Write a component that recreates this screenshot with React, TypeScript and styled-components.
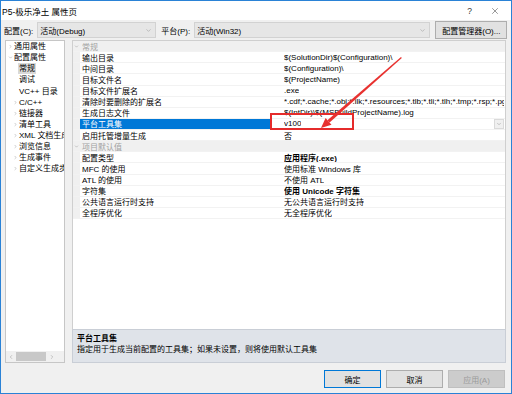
import React from 'react';
import styled, { createGlobalStyle } from 'styled-components';
import { ChevronDown, ChevronRight, ChevronLeft, X } from 'lucide-react';

const GlobalStyle = createGlobalStyle`
  html, body {
    margin: 0;
    padding: 0;
    background: #ffffff;
  }
  body {
    font-family: "Liberation Sans", "Noto Sans CJK SC", sans-serif;
    font-size: 8px;
    color: #000;
  }
  * { box-sizing: border-box; }
`;

const ROW_H = '11.13px';

const Window = styled.div`
  position: relative;
  width: 512px;
  height: 394px;
  border: 1px solid #2a82d6;
  background: #f0f0f0;
  display: flex;
  flex-direction: column;
  overflow: hidden;
`;

const TitleBar = styled.div`
  height: 19px;
  flex: none;
  background: #ffffff;
  display: flex;
  align-items: center;
  justify-content: space-between;
  padding-left: 1px;
  font-size: 8.5px;
`;

const TitleButtons = styled.div`
  display: flex;
  align-items: center;
  gap: 18px;
  padding-right: 11px;
  color: #333;
`;

const Toolbar = styled.div`
  height: 20px;
  flex: none;
  display: flex;
  align-items: center;
  padding: 0 5px 0 3px;
`;

const Label = styled.span`
  white-space: nowrap;
`;

const Combo = styled.div<{ $width: number }>`
  width: ${p => p.$width}px;
  flex: none;
  height: 16px;
  margin-left: 4px;
  margin-right: 5px;
  background: #e6e6e6;
  border: 1px solid #d2d2d2;
  display: flex;
  align-items: center;
  justify-content: space-between;
  padding: 0 3px 0 2px;
  white-space: nowrap;
  svg { color: #888; }
`;

const Button = styled.button<{ $focused?: boolean; $disabled?: boolean }>`
  height: 18px;
  padding: 0 6px;
  font: inherit;
  font-size: 8px;
  white-space: nowrap;
  background: ${p => (p.$disabled ? '#cccccc' : '#e1e1e1')};
  color: ${p => (p.$disabled ? '#9b9b9b' : '#000')};
  border: 1px solid ${p => (p.$focused ? '#0078d7' : p.$disabled ? '#bfbfbf' : '#adadad')};
  display: flex;
  align-items: center;
  justify-content: center;
`;

const Main = styled.div`
  height: 323px;
  flex: none;
  display: flex;
  gap: 7px;
  padding: 0 5px 0 4px;
`;

const Tree = styled.div`
  width: 60px;
  flex: none;
  background: #ffffff;
  border: 1px solid #c6c6c6;
  display: flex;
  flex-direction: column;
  overflow: hidden;
`;

const TreeList = styled.div`
  flex: 1;
  overflow: hidden;
`;

const TreeItem = styled.div<{ $indent: number; $selected?: boolean }>`
  height: ${ROW_H};
  display: flex;
  align-items: center;
  padding-left: ${p => p.$indent}px;
  white-space: nowrap;
  span {
    background: ${p => (p.$selected ? '#d9d9d9' : 'transparent')};
    padding: 0 1px;
    line-height: ${ROW_H};
  }
  svg { color: #8a8a8a; flex: none; }
`;

const Arrow = styled.div`
  width: 5px;
  flex: none;
  display: flex;
  align-items: center;
  justify-content: flex-start;
`;

const HScroll = styled.div`
  height: 11px;
  flex: none;
  background: #f0f0f0;
  display: flex;
  align-items: center;
  padding: 0 2px;
  svg { color: #777; flex: none; }
`;

const Thumb = styled.div`
  width: 30px;
  height: 9px;
  background: #c8c8c8;
  margin: 0 3px 0 2px;
`;

const RightPane = styled.div`
  flex: 1;
  min-width: 0;
  display: flex;
  flex-direction: column;
`;

const Grid = styled.div`
  flex: 1;
  background: #ffffff;
  border: 1px solid #cfcfcf;
  border-bottom: none;
  overflow: hidden;
`;

const GridRow = styled.div<{ $category?: boolean }>`
  height: ${ROW_H};
  display: flex;
  align-items: stretch;
  background: ${p => (p.$category ? '#f0f0f0' : '#ffffff')};
  border-bottom: 1px solid #f2f2f2;
  white-space: nowrap;
`;

const Gutter = styled.div`
  width: 7px;
  flex: none;
  background: #f0f0f0;
  display: flex;
  align-items: center;
  justify-content: center;
  svg { color: #8a8a8a; }
`;

const CategoryText = styled.div`
  display: flex;
  align-items: center;
  padding-left: 2px;
  color: #a2a2a2;
`;

const NameCell = styled.div<{ $selected?: boolean }>`
  width: 190px;
  flex: none;
  display: flex;
  align-items: center;
  padding-left: 2px;
  background: ${p => (p.$selected ? '#0078d7' : 'transparent')};
  color: ${p => (p.$selected ? '#ffffff' : '#000')};
  overflow: hidden;
`;

const ValueCell = styled.div<{ $bold?: boolean }>`
  flex: 1;
  min-width: 0;
  display: flex;
  align-items: center;
  justify-content: space-between;
  padding-left: 14px;
  padding-right: 1px;
  font-weight: ${p => (p.$bold ? 700 : 400)};
  overflow: hidden;
  span {
    overflow: hidden;
  }
`;

const DropButton = styled.div`
  width: 10px;
  height: 10px;
  flex: none;
  background: #f0f0f0;
  border: 1px solid #dadada;
  display: flex;
  align-items: center;
  justify-content: center;
  svg { color: #777; }
`;

const Description = styled.div`
  height: 34px;
  flex: none;
  background: #dfe3e9;
  border: 1px solid #c9ced6;
  padding: 3px 4px;
  display: flex;
  flex-direction: column;
  line-height: 11px;
`;

const DescTitle = styled.div`
  font-weight: 700;
`;

const Footer = styled.div`
  flex: 1;
  display: flex;
  justify-content: flex-end;
  align-items: flex-start;
  padding: 7px 6px 0 0;
  gap: 5px;
`;

const FooterButton = styled(Button)`
  width: 57px;
`;

const RedBox = styled.div`
  position: absolute;
  left: 269px;
  top: 112px;
  width: 84px;
  height: 17px;
  border: 2px solid #e52b2b;
  pointer-events: none;
`;

const Overlay = styled.svg`
  position: absolute;
  left: 0;
  top: 0;
  pointer-events: none;
`;

type Row =
  | { cat: string }
  | { name: string; value: string; bold?: boolean; selected?: boolean };

const rows: Row[] = [
  { cat: '常规' },
  { name: '输出目录', value: '$(SolutionDir)$(Configuration)\\' },
  { name: '中间目录', value: '$(Configuration)\\' },
  { name: '目标文件名', value: '$(ProjectName)' },
  { name: '目标文件扩展名', value: '.exe' },
  { name: '清除时要删除的扩展名', value: '*.cdf;*.cache;*.obj;*.ilk;*.resources;*.tlb;*.tli;*.tlh;*.tmp;*.rsp;*.pgc;*.pgd;*.meta' },
  { name: '生成日志文件', value: '$(IntDir)\\$(MSBuildProjectName).log' },
  { name: '平台工具集', value: 'v100', selected: true },
  { name: '启用托管增量生成', value: '否' },
  { cat: '项目默认值' },
  { name: '配置类型', value: '应用程序(.exe)', bold: true },
  { name: 'MFC 的使用', value: '使用标准 Windows 库' },
  { name: 'ATL 的使用', value: '不使用 ATL' },
  { name: '字符集', value: '使用 Unicode 字符集', bold: true },
  { name: '公共语言运行时支持', value: '无公共语言运行时支持' },
  { name: '全程序优化', value: '无全程序优化' },
];

type TreeNode = { label: string; indent: number; arrow?: 'right' | 'down'; selected?: boolean };

const tree: TreeNode[] = [
  { label: '通用属性', indent: 7, arrow: 'right' },
  { label: '配置属性', indent: 7, arrow: 'down' },
  { label: '常规', indent: 12, selected: true },
  { label: '调试', indent: 12 },
  { label: 'VC++ 目录', indent: 12 },
  { label: 'C/C++', indent: 12, arrow: 'right' },
  { label: '链接器', indent: 12, arrow: 'right' },
  { label: '清单工具', indent: 12, arrow: 'right' },
  { label: 'XML 文档生成器', indent: 12, arrow: 'right' },
  { label: '浏览信息', indent: 12, arrow: 'right' },
  { label: '生成事件', indent: 12, arrow: 'right' },
  { label: '自定义生成步骤', indent: 12, arrow: 'right' },
];

export default function App() {
  return (
    <>
      <GlobalStyle />
      <Window>
        <TitleBar>
          <span>P5-极乐净土 属性页</span>
          <TitleButtons>
            <span>?</span>
            <X size={10} strokeWidth={1.2} />
          </TitleButtons>
        </TitleBar>

        <Toolbar>
          <Label>配置(C):</Label>
          <Combo $width={119}>
            <span>活动(Debug)</span>
            <ChevronDown size={7} strokeWidth={1.5} />
          </Combo>
          <Label>平台(P):</Label>
          <Combo $width={236}>
            <span>活动(Win32)</span>
            <ChevronDown size={7} strokeWidth={1.5} />
          </Combo>
          <Button>配置管理器(O)...</Button>
        </Toolbar>

        <Main>
          <Tree>
            <TreeList>
              {tree.map(node => (
                <TreeItem key={node.label} $indent={node.indent - (node.arrow ? 5 : 0)} $selected={node.selected}>
                  {node.arrow && (
                    <Arrow>
                      {node.arrow === 'right' ? (
                        <ChevronRight size={5} strokeWidth={2} />
                      ) : (
                        <ChevronDown size={5} strokeWidth={2} />
                      )}
                    </Arrow>
                  )}
                  <span>{node.label}</span>
                </TreeItem>
              ))}
            </TreeList>
            <HScroll>
              <ChevronLeft size={6} strokeWidth={1.5} />
              <Thumb />
              <ChevronRight size={6} strokeWidth={1.5} />
            </HScroll>
          </Tree>

          <RightPane>
            <Grid>
              {rows.map((row, i) =>
                'cat' in row ? (
                  <GridRow key={i} $category>
                    <Gutter>
                      <ChevronDown size={5} strokeWidth={2} />
                    </Gutter>
                    <CategoryText>{row.cat}</CategoryText>
                  </GridRow>
                ) : (
                  <GridRow key={i}>
                    <Gutter />
                    <NameCell $selected={row.selected}>{row.name}</NameCell>
                    <ValueCell $bold={row.bold}>
                      <span>{row.value}</span>
                      {row.selected && (
                        <DropButton>
                          <ChevronDown size={6} strokeWidth={1.5} />
                        </DropButton>
                      )}
                    </ValueCell>
                  </GridRow>
                )
              )}
            </Grid>
            <Description>
              <DescTitle>平台工具集</DescTitle>
              <div>指定用于生成当前配置的工具集；如果未设置，则将使用默认工具集</div>
            </Description>
          </RightPane>
        </Main>

        <Footer>
          <FooterButton $focused>确定</FooterButton>
          <FooterButton>取消</FooterButton>
          <FooterButton $disabled>应用(A)</FooterButton>
        </Footer>

        <RedBox />
        <Overlay width={512} height={394} viewBox="0 0 512 394">
          <polygon points="400,56 400.8,57 328.6,121.5 326.4,119.3" fill="#e8312f" />
          <polygon points="320,127 324.6,117.1 330.5,123.7" fill="#e8312f" />
        </Overlay>
      </Window>
    </>
  );
}
